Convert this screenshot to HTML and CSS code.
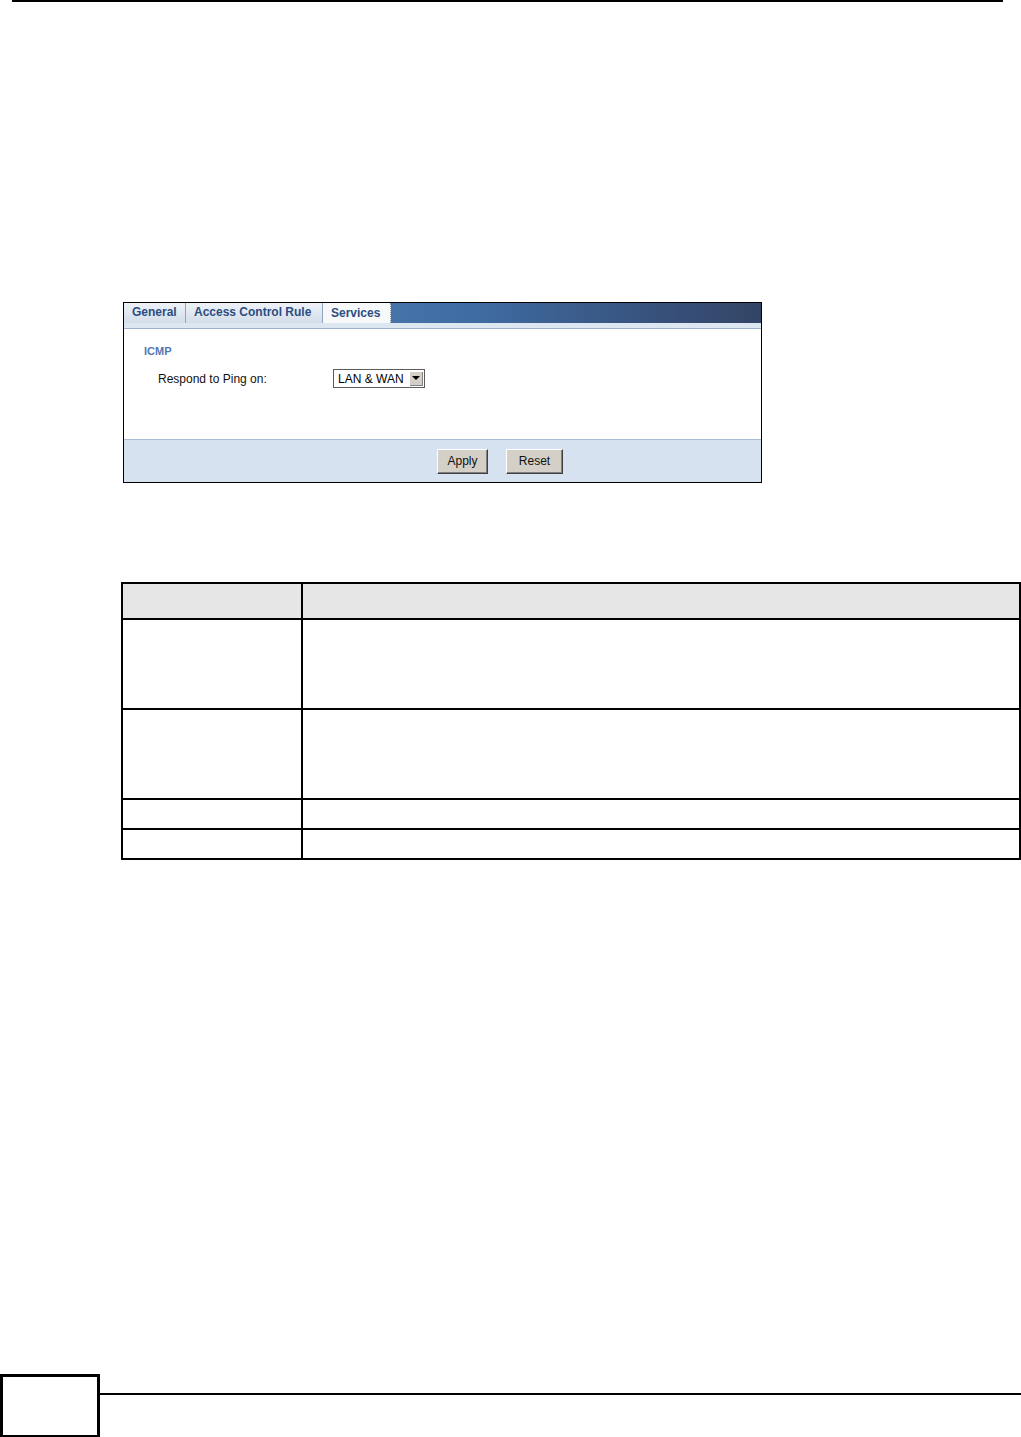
FILE: index.html
```html
<!DOCTYPE html>
<html lang="en">
<head>
  <meta charset="UTF-8" />
  <title>Services</title>
  <link rel="stylesheet" href="styles.css">
</head>
<body>

<div class="top-rule"></div>

<!-- screenshot of the router screen -->
<div class="shot">
  <div class="tab-bar">
    <span class="tab">General</span>
    <span class="tab">Access Control Rule</span>
    <span class="tab active">Services</span>
  </div>
  <div class="tab-strip"></div>
  <div class="shot-body">
    <p class="group">ICMP</p>
    <div class="field">
      <label>Respond to Ping on:</label>
      <span class="select">LAN &amp; WAN<span class="arrow"></span></span>
    </div>
  </div>
  <div class="shot-foot">
    <button class="btn btn-apply">Apply</button>
    <button class="btn btn-reset">Reset</button>
  </div>
</div>

<!-- field description table -->
<table class="desc">
  <tr class="head"><td class="c1"></td><td></td></tr>
  <tr class="tall"><td class="c1"></td><td></td></tr>
  <tr class="tall"><td class="c1"></td><td></td></tr>
  <tr class="short"><td class="c1"></td><td></td></tr>
  <tr class="short"><td class="c1"></td><td></td></tr>
</table>

<div class="footer">
  <div class="page-box"></div>
  <div class="foot-rule"></div>
</div>

</body>
</html>
```

FILE: styles.css
```css
body {
  margin: 0;
  font-family: "Liberation Sans", Arial, sans-serif;
  background: #fff;
}
.top-rule {
  margin-left: 12px;
  width: 991px;
  height: 2px;
  background: #000;
}

.shot {
  margin: 300px 0 0 123px;
  width: 637px;
  height: 179px;
  border: 1px solid #000;
  display: flex;
  flex-direction: column;
}
.tab-bar {
  height: 20px;
  display: flex;
  background: linear-gradient(to right, #5d88bd 0%, #3f6ca2 55%, #37507a 85%, #334566 100%);
}
.tab {
  font-size: 12px;
  font-weight: bold;
  color: #2c4d82;
  line-height: 19px;
  padding: 0 8px;
  background: linear-gradient(#eef2f7, #d3dde9);
  border-right: 1px solid #8ea6c6;
}
.tab:first-child {
  width: 45px;
}
.tab:nth-child(2) {
  width: 120px;
}
.tab.active {
  width: 51px;
  background: #f6f8fa;
  border-right: 1px dotted #7f8fa6;
  line-height: 21px;
}
.tab-strip {
  height: 5px;
  background: #dde7f2;
  border-bottom: 1px solid #9db1cc;
}
.shot-body {
  flex: 1;
  background: #fff;
  border-bottom: 1px solid #a9bbd2;
}
.group {
  margin: 16px 0 0 20px;
  font-size: 11px;
  font-weight: bold;
  color: #5577b4;
}
.field {
  display: flex;
  align-items: center;
  margin: 12px 0 0 34px;
  font-size: 12px;
}
.field label {
  width: 175px;
  color: #111;
}
.select {
  display: flex;
  align-items: center;
  justify-content: space-between;
  width: 86px;
  height: 17px;
  padding-left: 4px;
  border: 1px solid #5c5c5c;
  font-size: 12px;
  background: #fff;
}
.arrow {
  position: relative;
  width: 14px;
  height: 15px;
  margin-right: 1px;
  background: #d4d0c8;
  box-shadow: inset 1px 1px 0 #fff, inset -1px -1px 0 #808080;
}
.arrow::after {
  content: "";
  position: absolute;
  left: 3px;
  top: 5px;
  border-left: 4px solid transparent;
  border-right: 4px solid transparent;
  border-top: 4px solid #000;
}
.shot-foot {
  height: 42px;
  background: #d6e2ef;
  display: flex;
  align-items: center;
  padding-left: 313px;
  gap: 18px;
}
.btn {
  height: 25px;
  font-family: "Liberation Sans", Arial, sans-serif;
  font-size: 12px;
  color: #111;
  background: #d4d0c8;
  border: 1px solid;
  border-color: #fff #404040 #404040 #fff;
  box-shadow: inset -1px -1px 0 #808080;
  padding: 0;
}
.btn-apply {
  width: 51px;
}
.btn-reset {
  width: 57px;
}

.desc {
  margin: 99px 0 0 121px;
  width: 900px;
  border-collapse: collapse;
}
.desc td {
  border: 2px solid #000;
  padding: 0;
}
.desc .c1 {
  width: 178px;
}
.desc .head td {
  height: 34px;
  background: #e6e6e6;
}
.desc .tall td {
  height: 88px;
}
.desc .short td {
  height: 28px;
}

.footer {
  margin-top: 514px;
  display: flex;
}
.page-box {
  width: 94px;
  height: 58px;
  border: 3px solid #000;
}
.foot-rule {
  flex: 1;
  height: 2px;
  margin-top: 19px;
  background: #000;
}
```
